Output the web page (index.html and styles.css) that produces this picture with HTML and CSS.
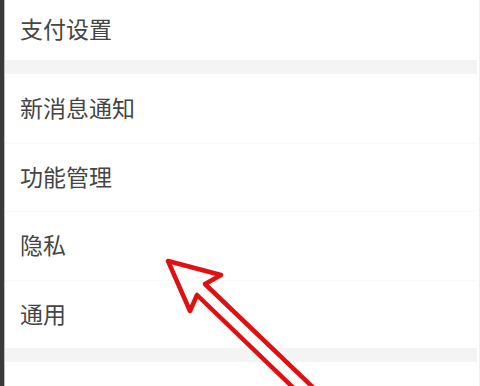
FILE: index.html
```html
<!DOCTYPE html>
<html lang="zh-CN">

<head>
	<meta charset="UTF-8" />
	<meta name="viewport" content="width=device-width,initial-scale=1" />
	<title>设置</title>
	<link rel="stylesheet" href="styles.css">
</head>

<body>
	<div class="edge"></div>
	<div class="screen">
		<div class="group">
			<div class="item item-top">支付设置</div>
		</div>
		<div class="gap"></div>
		<div class="group">
			<div class="item">新消息通知</div>
			<div class="item">功能管理</div>
			<div class="item">隐私</div>
			<div class="item">通用</div>
		</div>
		<div class="gap"></div>
		<div class="group"></div>
	</div>

	<svg class="arrow" width="480" height="386" viewBox="0 0 480 386">
		<polygon points="168,261 221,275 205,284 322,396 306,400 197,295 190,311"
			fill="#fff" stroke="#e01010" stroke-width="4.5" stroke-linejoin="round" />
	</svg>
</body>

</html>
```

FILE: styles.css
```css
* {
	box-sizing: border-box;
	margin: 0;
	padding: 0;
}

html,
body {
	width: 480px;
	height: 386px;
	overflow: hidden;
	background: #fff;
	font-family: 'Noto Sans CJK SC', 'Noto Sans', sans-serif;
}

body {
	display: flex;
	position: relative;
}

.edge {
	width: 5px;
	background: #3a3a3a;
	border-right: 1px solid #bdbdbd;
}

.screen {
	flex: 1;
	padding-right: 2px;
	border-right: 1px solid #f0f0f0;
}

.group {
	background: #fff;
}

.item {
	height: 68.5px;
	padding: 0 0 3px 15px;
	display: flex;
	align-items: center;
	font-size: 23px;
	color: #454545;
	border-top: 1px solid #f9f9f9;
}

.item:first-child {
	border-top: none;
}

.item-top {
	height: 60px;
	padding-bottom: 5px;
}

.gap {
	height: 14px;
	background: #f4f4f4;
}

.arrow {
	position: absolute;
	left: 0;
	top: 0;
}
```
